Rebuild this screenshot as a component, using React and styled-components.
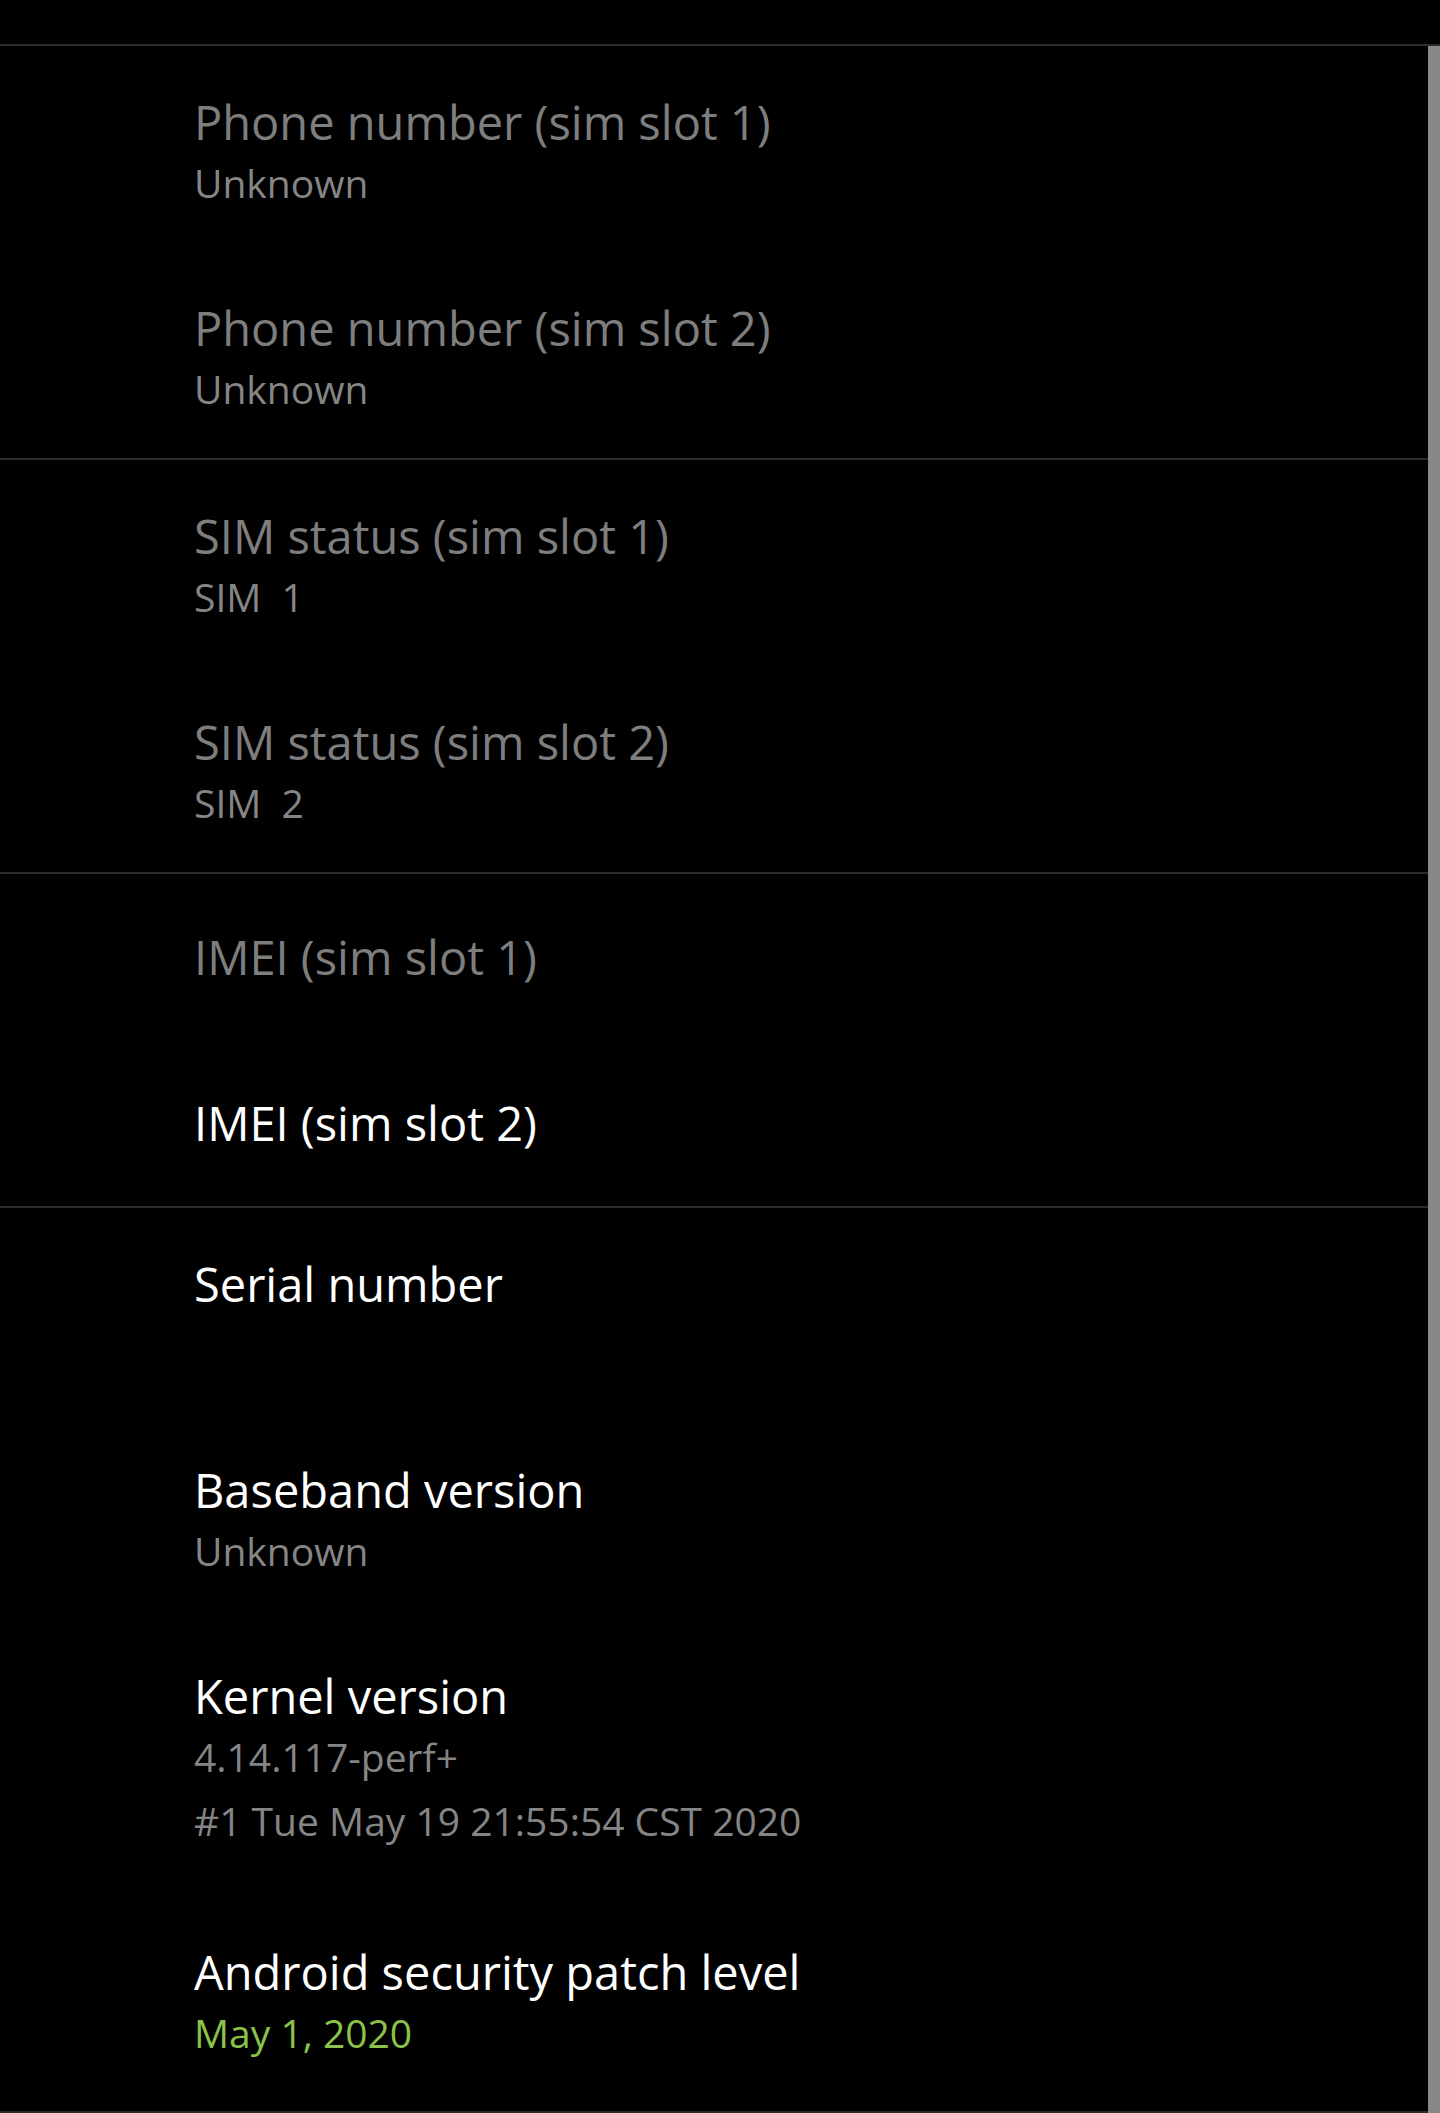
import React from "react";
import styled, { createGlobalStyle } from "styled-components";

const GlobalStyle = createGlobalStyle`
  html, body {
    margin: 0;
    padding: 0;
    background: #000;
  }
  body {
    font-family: "Open Sans", "Noto Sans", sans-serif;
    -webkit-font-smoothing: antialiased;
  }
`;

const groups = [
  [
    { title: "Phone number (sim slot 1)", summary: ["Unknown"], disabled: true },
    { title: "Phone number (sim slot 2)", summary: ["Unknown"], disabled: true }
  ],
  [
    { title: "SIM status (sim slot 1)", summary: ["SIM  1"], disabled: true },
    { title: "SIM status (sim slot 2)", summary: ["SIM  2"], disabled: true }
  ],
  [
    { title: "IMEI (sim slot 1)", disabled: true },
    { title: "IMEI (sim slot 2)" }
  ],
  [
    { title: "Serial number", summary: [""] },
    { title: "Baseband version", summary: ["Unknown"] },
    {
      title: "Kernel version",
      summary: ["4.14.117-perf+", "#1 Tue May 19 21:55:54 CST 2020"]
    },
    { title: "Android security patch level", summary: ["May 1, 2020"], accent: true }
  ]
];

// padding of a row: single line, title + summary, title + several summary lines
const rowPadding = item => {
  if (!item.summary) return "53px 0 53px 194px";
  if (item.summary.length > 1) return "46px 0 44px 194px";
  return "46px 0 38px 194px";
};

const App = () => (
  <Screen>
    <GlobalStyle />
    <TopBar />
    <Body>
      <List>
        {groups.map((items, i) => (
          <Group key={i}>
            {items.map(item => (
              <Row key={item.title} pad={rowPadding(item)}>
                <Title disabled={item.disabled}>{item.title}</Title>
                {item.summary &&
                  item.summary.map((line, j) => (
                    <Summary key={j} accent={item.accent}>
                      {line || "\u00a0"}
                    </Summary>
                  ))}
              </Row>
            ))}
          </Group>
        ))}
      </List>
      <ScrollTrack>
        <ScrollThumb />
      </ScrollTrack>
    </Body>
  </Screen>
);

const Screen = styled.div`
  width: 1440px;
  height: 2113px;
  background: #000;
  overflow: hidden;
  display: flex;
  flex-direction: column;
`;

const TopBar = styled.div`
  height: 44px;
  flex: none;
  border-bottom: 2px solid #2b2b2b;
`;

const Body = styled.div`
  flex: 1;
  display: flex;
  min-height: 0;
`;

const List = styled.div`
  flex: 1;
  display: flex;
  flex-direction: column;
  border-bottom: 2px solid #2b2b2b;
`;

const Group = styled.div`
  display: flex;
  flex-direction: column;
  & + & {
    border-top: 2px solid #2b2b2b;
  }
`;

const Row = styled.div`
  display: flex;
  flex-direction: column;
  padding: ${p => p.pad};
`;

const Title = styled.div`
  font-size: 47px;
  line-height: 60px;
  color: ${p => (p.disabled ? "#7e7e7e" : "#ffffff")};
`;

const Summary = styled.div`
  font-size: 39px;
  line-height: 62px;
  white-space: pre;
  color: ${p => (p.accent ? "#8bc34a" : "#858585")};

  & + & {
    margin-top: 2px;
  }
`;

const ScrollTrack = styled.div`
  width: 12px;
  flex: none;
  display: flex;
  flex-direction: column;
`;

const ScrollThumb = styled.div`
  flex: 1;
  background: #888888;
`;

export default App;
